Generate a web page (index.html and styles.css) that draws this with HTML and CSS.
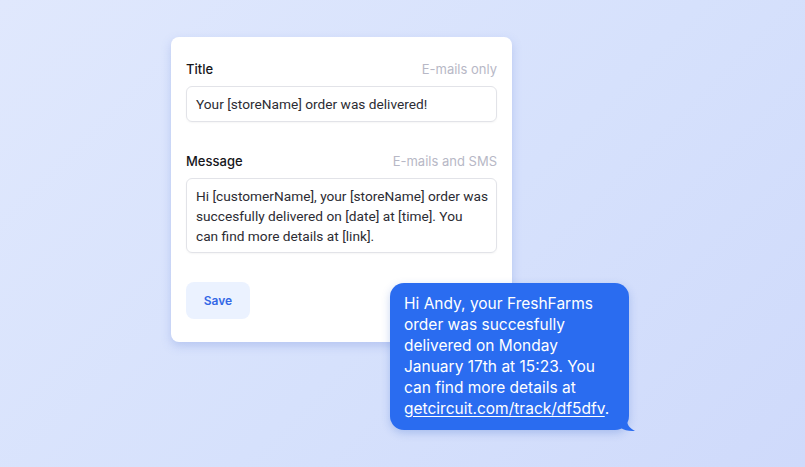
FILE: index.html
```html
<!DOCTYPE html>
<html>
<head>
<meta charset="utf-8">
<link rel="stylesheet" href="styles.css">
</head>
<body>
<div class="stage">
  <div class="card">
    <div class="field-head">
      <span class="label">Title</span>
      <span class="hint">E-mails only</span>
    </div>
    <div class="input">Your [storeName] order was delivered!</div>
    <div class="field-head second">
      <span class="label">Message</span>
      <span class="hint">E-mails and SMS</span>
    </div>
    <div class="input area">Hi [customerName], your [storeName] order was<br>succesfully delivered on [date] at [time]. You<br>can find more details at [link].</div>
    <div class="actions">
      <button class="save">Save</button>
    </div>
  </div>
  <div class="bubble">
    Hi Andy, your FreshFarms order was succesfully delivered on Monday January 17th at 15:23. You can find more details at <span class="link">getcircuit.com/track/df5dfv</span>.
    <svg class="tail" width="14" height="12" viewBox="0 0 14 12"><path d="M0 0 L6 0 C6 4 8 8 14 11 C8 11.5 3 10 0 8 Z" fill="#2a6cf0"/></svg>
  </div>
</div>
</body>
</html>
```
FILE: styles.css
```css
* { box-sizing: border-box; }
html, body { margin: 0; padding: 0; }
body {
  width: 805px;
  height: 467px;
  overflow: hidden;
  background: linear-gradient(135deg, #e0e8fd 0%, #d6e1fc 55%, #cfdafb 100%);
  font-family: "Inter", "Liberation Sans", sans-serif;
}
.stage {
  position: relative;
  width: 805px;
  height: 467px;
  padding: 37px 0 0 171px;
}
.card {
  width: 341px;
  height: 305px;
  background: #ffffff;
  border-radius: 8px;
  box-shadow: 0 4px 10px rgba(120, 145, 220, 0.35);
  padding: 24px 15px 0 15px;
}
.field-head {
  display: flex;
  justify-content: space-between;
  align-items: baseline;
  height: 19px;
  margin-bottom: 6px;
}
.field-head.second { margin-top: 31px; }
.label {
  font-size: 13px;
  font-weight: 500;
  color: #16161a;
}
.hint {
  font-size: 13px;
  color: #b7b8c6;
}
.input {
  border: 1px solid #e2e3e8;
  border-radius: 6px;
  height: 36px;
  padding: 0 9px;
  display: flex;
  align-items: center;
  font-family: "Roboto", "Liberation Sans", sans-serif;
  font-size: 13.7px;
  color: #2c2c33;
  white-space: nowrap;
  box-shadow: 0 1px 2px rgba(0,0,0,0.04);
}
.input.area {
  display: block;
  height: 75px;
  padding: 7px 9px;
  line-height: 20px;
}
.actions { margin-top: 29px; }
.save {
  width: 64px;
  height: 37px;
  border: none;
  border-radius: 8px;
  background: #ebf2ff;
  color: #3468e6;
  font-family: "Inter", "Liberation Sans", sans-serif;
  font-weight: 600;
  font-size: 12px;
}
.bubble {
  position: absolute;
  left: 390px;
  top: 283px;
  width: 239px;
  height: 147px;
  background: #2a6cf0;
  border-radius: 14px;
  color: #ffffff;
  font-size: 15.5px;
  line-height: 21px;
  padding: 10px 10px 0 14px;
  box-shadow: 0 3px 8px rgba(40, 90, 200, 0.25);
}
.link { text-decoration: underline; text-underline-offset: 2px; }
.tail {
  position: absolute;
  right: -6px;
  bottom: -2px;
}
```
